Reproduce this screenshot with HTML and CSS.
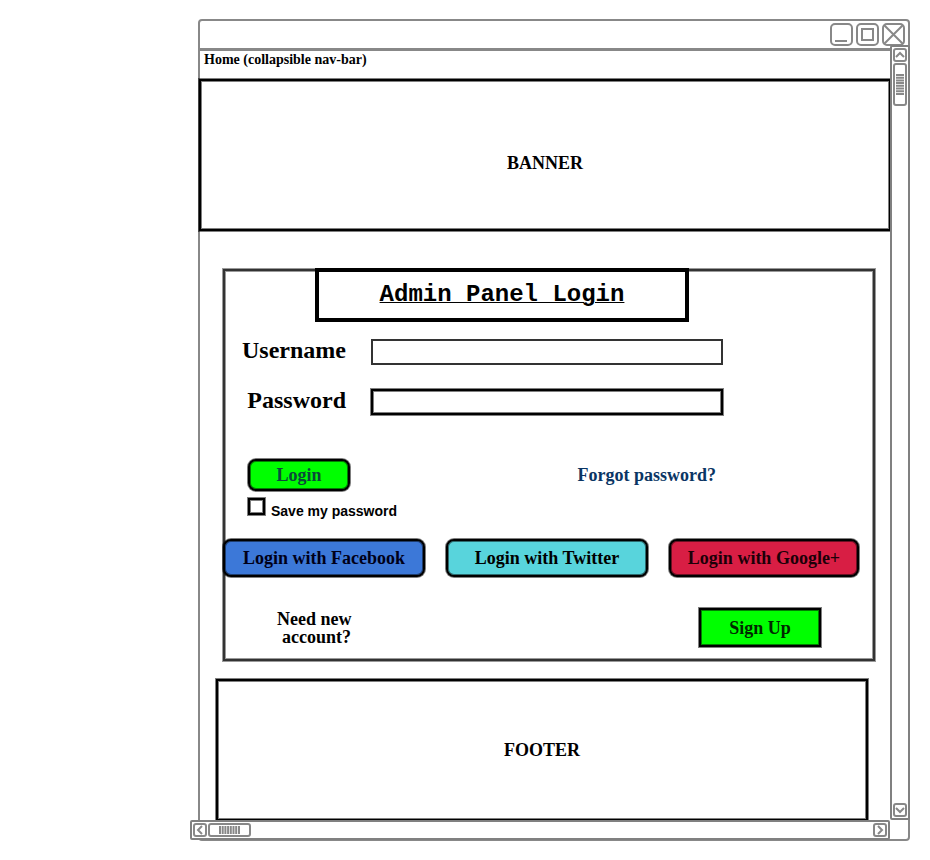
FILE: index.html
```html
<!DOCTYPE html>
<html lang="en">
<head>
<meta charset="utf-8">
<title>Admin Panel Login</title>
<link rel="stylesheet" href="styles.css">
</head>
<body>
<div class="window">
  <div class="titlebar">
    <button class="win-btn" type="button" aria-label="Minimize"><svg viewBox="0 0 24 24"><rect x="1" y="1" width="21" height="21" rx="4"/><path d="M5 18H17"/></svg></button>
    <button class="win-btn" type="button" aria-label="Maximize"><svg viewBox="0 0 24 24"><rect x="1" y="1" width="21" height="21" rx="4"/><rect x="6" y="6" width="11" height="11"/></svg></button>
    <button class="win-btn" type="button" aria-label="Close"><svg viewBox="0 0 24 24"><rect x="1" y="1" width="21" height="21" rx="4"/><path d="M2 2L21 21M21 2L2 21"/></svg></button>
  </div>
  <div class="body">
    <div class="page">
      <nav class="nav"><a href="#">Home (collapsible nav-bar)</a></nav>
      <header class="banner stroke">BANNER</header>
      <main class="card stroke">
        <h1 class="title">Admin Panel Login</h1>
        <form>
          <div class="field">
            <label for="user">Username</label>
            <input class="thin" id="user" type="text">
          </div>
          <div class="field">
            <label for="pass">Password</label>
            <input class="stroke" id="pass" type="password">
          </div>
          <div class="actions">
            <button class="login stroke" type="submit">Login</button>
            <a class="forgot" href="#">Forgot password?</a>
          </div>
          <div class="save">
            <input class="stroke" id="save" type="checkbox">
            <label for="save">Save my password</label>
          </div>
        </form>
        <div class="social">
          <button class="facebook stroke" type="button">Login with Facebook</button>
          <button class="twitter stroke" type="button">Login with Twitter</button>
          <button class="google stroke" type="button">Login with Google+</button>
        </div>
        <div class="register">
          <p>Need new<br>&nbsp;account?</p>
          <button class="signup stroke" type="button">Sign Up</button>
        </div>
      </main>
      <footer class="footer stroke">FOOTER</footer>
    </div>
    <div class="vscroll">
      <button class="arrow" type="button" aria-label="Scroll up"><svg viewBox="0 0 14 14"><rect x="1" y="1" width="12" height="12" rx="2"/><path d="M3 9L7 5L11 9"/></svg></button>
      <svg class="vthumb" viewBox="0 0 14 43"><rect x="1" y="1" width="12" height="41" rx="2"/><path class="grip" d="M3 12H11M3 14.7H11M3 17.4H11M3 20.1H11M3 22.8H11M3 25.5H11M3 28.2H11M3 31H11"/></svg>
      <button class="arrow end" type="button" aria-label="Scroll down"><svg viewBox="0 0 14 14"><rect x="1" y="1" width="12" height="12" rx="2"/><path d="M3 5L7 9L11 5"/></svg></button>
    </div>
  </div>
  <div class="hscroll">
    <button class="arrow" type="button" aria-label="Scroll left"><svg viewBox="0 0 14 14"><rect x="1" y="1" width="12" height="12" rx="2"/><path d="M9 3L5 7L9 11"/></svg></button>
    <svg class="hthumb" viewBox="0 0 43 14"><rect x="1" y="1" width="41" height="12" rx="2"/><path class="grip" d="M12 3V11M14.7 3V11M17.4 3V11M20.1 3V11M22.8 3V11M25.5 3V11M28.2 3V11M31 3V11"/></svg>
    <button class="arrow end" type="button" aria-label="Scroll right"><svg viewBox="0 0 14 14"><rect x="1" y="1" width="12" height="12" rx="2"/><path d="M5 3L9 7L5 11"/></svg></button>
  </div>
</div>
</body>
</html>
```
FILE: styles.css
```css
* { box-sizing: border-box; }

body {
  margin: 0;
  background: #fff;
  color: #000;
  font: bold 18px/18px "Liberation Serif", "Times New Roman", serif;
}

a { color: inherit; text-decoration: none; }

button {
  padding: 0;
  font: inherit;
  color: inherit;
  background: none;
  border: 0;
}

svg {
  display: block;
  fill: none;
  stroke: #888;
  stroke-width: 2;
}

/* Heavy outline with a soft edge on both sides */
.stroke {
  --line: #000;
  --edge: rgba(0, 0, 0, 0.5);
  border: 2px solid var(--line);
  box-shadow: 0 0 0 1px var(--edge), inset 0 0 0 1px var(--edge);
}

.window {
  margin: 19px 20px 0 198px;
  border: 2px solid #888;
  border-radius: 4px;
}

.titlebar {
  display: flex;
  justify-content: flex-end;
  gap: 2px;
  height: 30px;
  padding: 2px 2px 0 0;
  border-bottom: 3px solid #888;
}

.win-btn { width: 24px; height: 24px; }
.win-btn svg { width: 24px; height: 24px; }

.body { display: flex; }

.page { flex: 1; min-width: 0; }

.nav {
  padding: 0 4px 10px;
  font-size: 14px;
}

.banner {
  display: grid;
  place-items: center;
  height: 152px;
  margin: 0 -1px;
  padding-top: 16px;
}

.card {
  --line: #333;
  --edge: rgba(51, 51, 51, 0.5);
  margin: 38px 15px 0 23px;
}

.title {
  margin: -3px 184px 0 90px;
  padding: 11px 0;
  border: 4px solid #000;
  background: #fff;
  font: bold 24px/24px "Liberation Mono", "Courier New", monospace;
  text-align: center;
  text-decoration: underline 1px;
}

.field {
  display: grid;
  grid-template-columns: 121px 1fr;
  column-gap: 25px;
  align-items: center;
  margin: 17px 150px 0 0;
  font-size: 24px;
  line-height: 22px;
}
.field + .field { margin-top: 24px; }
.field label { text-align: right; padding-bottom: 4px; }
.field input {
  width: 100%;
  height: 26px;
  padding: 0 6px;
  background: #fff;
  border-radius: 0;
  font: 16px "Liberation Serif", serif;
}
.thin { border: 2px solid #333; }

.actions {
  display: flex;
  align-items: center;
  justify-content: space-between;
  margin: 44px 157px 0 23px;
}
.login {
  width: 102px;
  height: 32px;
  border-radius: 8px;
  background: #0f0;
  color: #0b4a3a;
}
.forgot { color: #0a3564; }

.save {
  display: flex;
  gap: 6px;
  margin: 7px 0 0 23px;
  font: bold 14px/16px "Liberation Sans", Arial, sans-serif;
}
.save input {
  appearance: none;
  width: 17px;
  height: 17px;
  margin: 0;
  background: #fff;
}
.save label { padding-top: 5px; }

.social {
  display: grid;
  grid-template-columns: 202fr 202fr 190fr;
  gap: 21px;
  margin: 20px 14px 0 -2px;
}
.social button { height: 38px; border-radius: 8px; }
.facebook { background: #3c78d8; color: #000018; }
.twitter { background: #58d4dc; }
.google { background: #d81e44; color: #1c0008; }

.register {
  display: flex;
  justify-content: space-between;
  margin: 31px 52px 12px;
}
.register p { margin: 2px 0 0; text-align: center; }
.signup {
  width: 122px;
  height: 39px;
  background: #0f0;
  color: #002800;
}

.footer {
  display: grid;
  place-items: center;
  height: 142px;
  margin: 18px 22px -1px 16px;
}

.vscroll {
  display: flex;
  flex-direction: column;
  gap: 1px;
  width: 20px;
  margin: -6px -2px 0 0;
  padding: 1px;
  background: #fff;
  border: 2px solid #808080;
  border-radius: 2px;
  z-index: 1;
}

.hscroll {
  position: relative;
  display: flex;
  gap: 1px;
  height: 20px;
  margin: 0 18px -1px -10px;
  padding: 1px;
  background: #fff;
  border: 2px solid #808080;
  border-radius: 2px;
}

.arrow { width: 14px; height: 14px; }
.arrow svg { width: 14px; height: 14px; }
.vscroll .end { margin-top: auto; }
.hscroll .end { margin-left: auto; }
.vthumb { width: 14px; height: 43px; }
.hthumb { width: 43px; height: 14px; }
.grip { stroke-width: 2; }
```
